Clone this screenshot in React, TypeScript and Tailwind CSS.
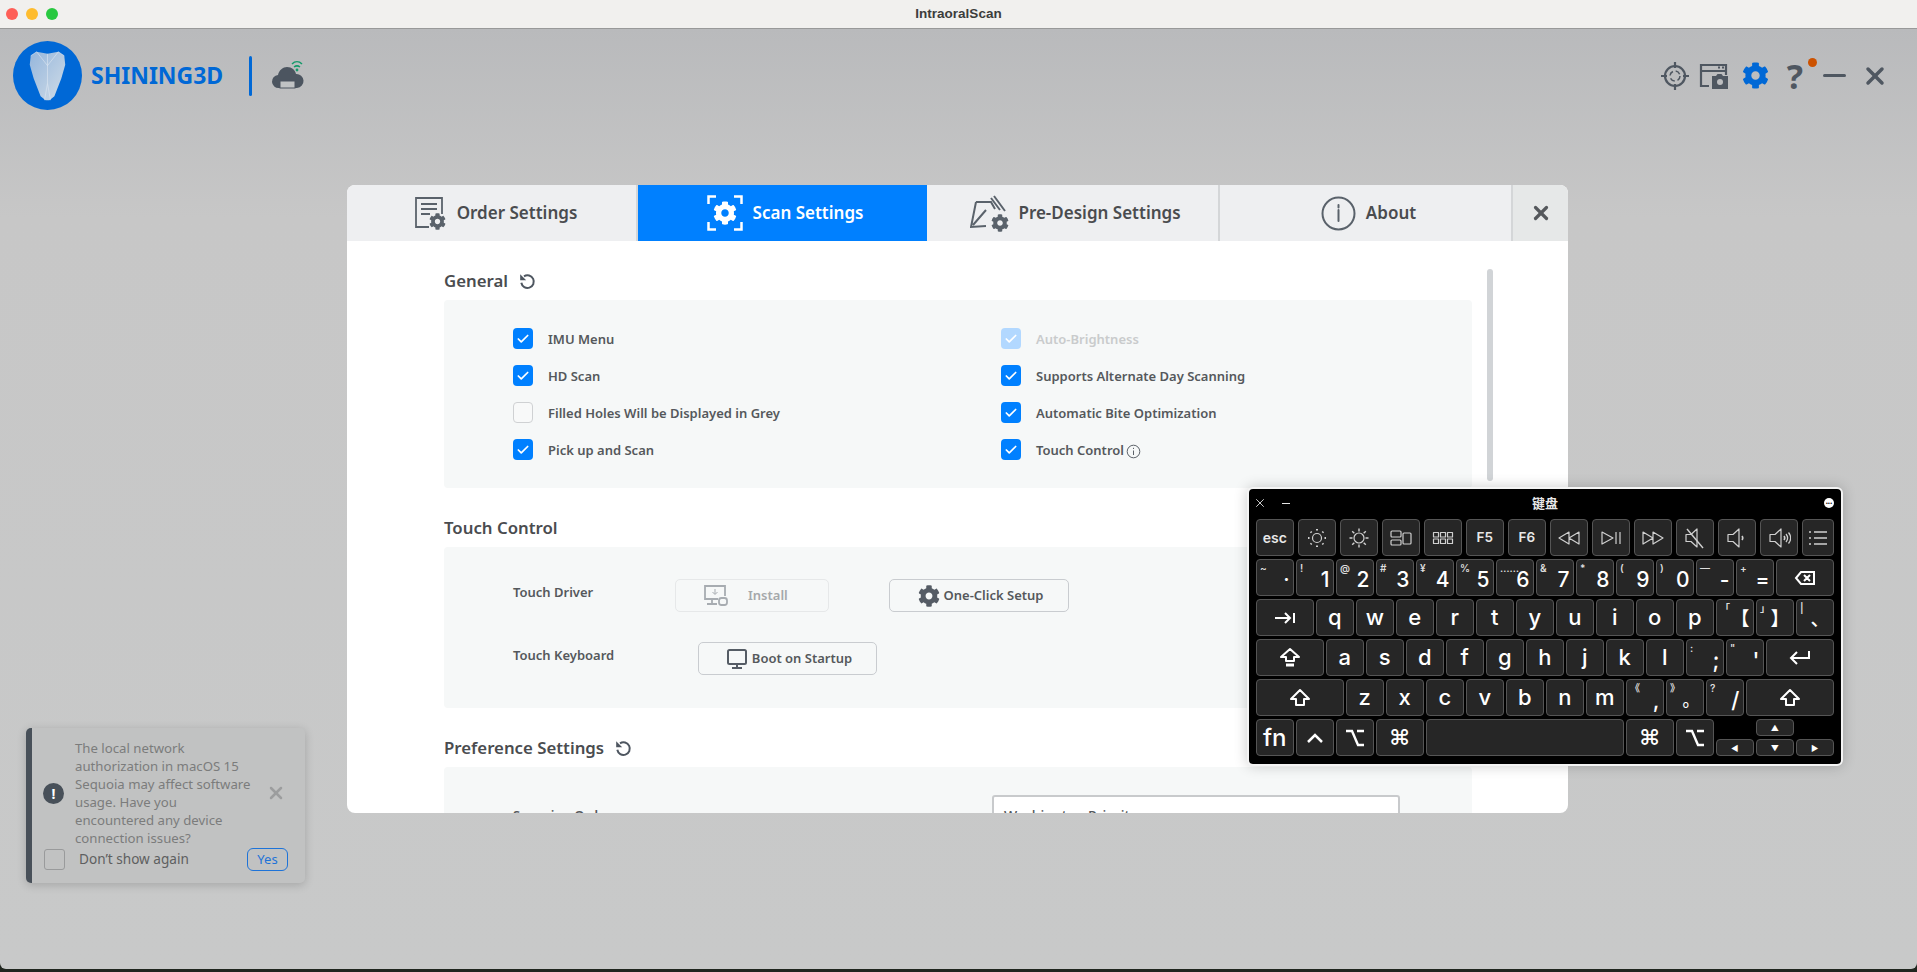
import { Check, ChevronDown, X } from 'lucide-react';
import { FaCog } from 'react-icons/fa';
import type { ReactNode } from 'react';

const Gear = ({ className = '' }: { className?: string }) => <FaCog className={className} />;

const Reset = () => (
  <svg width="17" height="17" viewBox="0 0 17 17" fill="none" stroke="#4e5660" strokeWidth="2">
    <path d="M5 3.400A6.300 6.300 0 1 1 2.300 9.800" />
    <path d="M1.200 1.200v6h6z" fill="#4e5660" stroke="none" />
  </svg>
);

const Box = ({ checked, off }: { checked?: boolean; off?: boolean }) => (
  <span
    className={`flex h-[21px] w-[20px] items-center justify-center rounded-[4px] ${
      off ? 'bg-[#b2d8ff]' : checked ? 'bg-[#0080ff]' : 'border border-[#cfd1d3] bg-[#f8f9f9]'
    }`}
  >
    {checked && <Check size={14} strokeWidth={3} className="text-white" />}
  </span>
);

const Option = ({ label, checked = true, off, info }: { label: string; checked?: boolean; off?: boolean; info?: boolean }) => (
  <div className="flex h-[21px] items-center">
    <Box checked={checked} off={off} />
    <span className={`ml-[15px] mt-[2px] text-[13px] font-semibold ${off ? 'text-[#c9cbcc]' : 'text-[#55585c]'}`}>{label}</span>
    {info && (
      <svg width="15" height="15" viewBox="0 0 15 15" className="ml-[2px] mt-[3px]" fill="none" stroke="#5c6269">
        <circle cx="7.500" cy="7.500" r="6.300" />
        <path d="M7.500 6.500v4.500M7.500 3.800v1.200" />
      </svg>
    )}
  </div>
);

const Title = ({ children, reset }: { children: string; reset?: boolean }) => (
  <div className="mb-[7px] flex h-[24px] items-center gap-[11px] text-[16.800px] font-semibold text-[#4a4c4f]">
    {children}
    {reset && <Reset />}
  </div>
);

const Tab = ({ w, icon, label, active, gap }: { w: string; icon: ReactNode; label: string; active?: boolean; gap: string }) => (
  <div
    className={`flex h-full items-center justify-center ${w} ${gap} text-[17px] font-semibold ${
      active ? 'bg-[#0080ff] text-white' : 'border-r-2 border-[#d4d6d8] bg-[#eeeff1] text-[#4a4c4f]'
    }`}
  >
    {icon}
    <span>{label}</span>
  </div>
);

const Btn = ({ w, icon, label, off, gap = 'gap-[4px] justify-center pl-[3px]' }: { w: string; icon: ReactNode; label: string; off?: boolean; gap?: string }) => (
  <div
    className={`flex h-[33px] items-center rounded-[5px] border text-[13px] font-semibold ${w} ${gap} ${
      off ? 'border-[#e6e8e9] text-[#a5a8ab]' : 'border-[#c9ccd0] text-[#55585c]'
    }`}
  >
    {icon}
    {label}
  </div>
);

const Monitor = () => (
  <svg width="22" height="22" viewBox="0 0 22 22" fill="none" stroke="#555c65" strokeWidth="2">
    <rect x="2" y="2" width="18" height="14" rx="1.500" />
    <path d="M11 16v3M6 20h10" />
  </svg>
);

const InstallIcon = () => (
  <svg width="25" height="21" viewBox="0 0 25 21" fill="none" stroke="#a7acb1" strokeWidth="1.800">
    <path d="M15 14H2V1h20v10" />
    <path d="M9 14v4M4 19h10" />
    <path d="M12 4v5M9.500 7l2.500 2.500L14.500 7" strokeWidth="1" />
    <rect x="16" y="13" width="8" height="7" rx="2.500" />
  </svg>
);

type KeyProps = { w: string; h?: string; sub?: string; main?: ReactNode; center?: boolean; size?: string };

const Key = ({ w, h = 'h-[37px]', sub, main, center, size = 'text-[22px]' }: KeyProps) => (
  <div className={`relative shrink-0 rounded-[4px] border-[1.500px] border-[#555555] bg-[#262626] text-white ${w} ${h} ${size}`}>
    {sub && <span className="absolute left-[3px] top-[2px] text-[10px] font-semibold leading-[12px] text-[#dddddd]">{sub}</span>}
    {center ? (
      <span className="flex h-full w-full items-center justify-center font-medium">{main}</span>
    ) : (
      <span className="absolute bottom-[2px] right-[3px] leading-[26px] font-medium">{main}</span>
    )}
  </div>
);

const Ico = ({ children, w = 24 }: { children: ReactNode; w?: number }) => (
  <svg width={w} height="24" viewBox={`0 0 ${w} 24`} fill="none" stroke="#d0d0d0" strokeWidth="1.200" strokeLinejoin="round">
    {children}
  </svg>
);

const Sun = ({ big }: { big?: boolean }) => (
  <Ico>
    <circle cx="12" cy="12" r={big ? 5 : 4.500} />
    <path
      strokeWidth={big ? 1.400 : 2}
      d={
        big
          ? 'M12 2.500v3M12 18.500v3M2.500 12h3M18.500 12h3M5.200 5.200l2.100 2.100M16.700 16.700l2.100 2.100M5.200 18.800l2.100-2.100M16.700 7.300l2.100-2.100'
          : 'M12 3v1.500M12 19.500V21M3 12h1.500M19.500 12H21M5.600 5.600l1 1M17.400 17.400l1 1M5.600 18.400l1-1M17.400 6.600l1-1'
      }
    />
  </Ico>
);

const Speaker = ({ waves, mute }: { waves: number; mute?: boolean }) => (
  <Ico>
    <path d="M3 8.500h5l6-5.500v18l-6-5.500H3z" />
    {waves > 0 && <path d="M17 10c1 1.300 1 2.700 0 4" strokeWidth="1.600" />}
    {waves > 1 && <path d="M19 8c2 2.500 2 5.500 0 8M21.500 6.500c2.800 3.500 2.800 7.500 0 11" strokeWidth="1.300" />}
    {mute && <path d="M4 3l16 19" strokeWidth="1.400" />}
  </Ico>
);

const Shift = ({ caps }: { caps?: boolean }) => (
  <svg width="22" height="22" viewBox="0 0 22 22" fill="none" stroke="white" strokeWidth="2" strokeLinejoin="round">
    <path d={caps ? 'M11 2 2 10h5v4h8v-4h5z' : 'M11 3 2 12h5v6h8v-6h5z'} />
    {caps && <path d="M7 18h8" strokeWidth="3" />}
  </svg>
);

const Option2 = () => (
  <svg width="20" height="18" viewBox="0 0 20 18" fill="none" stroke="white" strokeWidth="2.400">
    <path d="M1 2h6l6 14h6M12 2h7" />
  </svg>
);

const k = 'w-[37.500px]';

const Keyboard = () => (
  <div className="absolute left-[1247px] top-[487px] h-[279px] w-[596px] rounded-[6px] border-2 border-[#f4f4f4] bg-black px-[7px] shadow-[0_0_14px_rgba(0,0,0,0.2)]">
    <div className="relative flex h-[30px] items-center justify-center pb-[2px]">
      <X size={14} className="absolute -left-[3px] text-[#e5e5e5]" strokeWidth={1.500} />
      <span className="absolute left-[26px] h-px w-[8px] bg-[#e5e5e5]" />
      <span className="font-['Noto_Sans_CJK_SC',sans-serif] text-[13px] font-bold text-[#e8e8e8]">键盘</span>
      <span className="absolute right-0 flex h-[10px] w-[10px] items-center justify-center rounded-full bg-white text-[8px] font-bold leading-[6px] text-black">
        ···
      </span>
    </div>
    <div className="flex flex-col gap-[3px] font-['Inter','Noto_Sans_CJK_SC',sans-serif]">
      <div className="flex gap-[4.300px]">
        {[
          <span className="text-[14px] font-semibold text-[#e8e8e8]">esc</span>,
          <Sun />,
          <Sun big />,
          <Ico>
            <rect x="2" y="5" width="10" height="6" rx="1" />
            <rect x="2" y="14" width="10" height="5" rx="1" />
            <rect x="14" y="7" width="8" height="11" rx="1" />
          </Ico>,
          <Ico>
            {[3, 10, 17].map((x) => (
              <g key={x}>
                <rect x={x - 0.500} y="6.500" width="5" height="4.500" />
                <rect x={x - 0.500} y="13" width="5" height="4.500" />
              </g>
            ))}
          </Ico>,
          <span className="text-[13.500px] font-semibold text-[#e8e8e8]">F5</span>,
          <span className="text-[13.500px] font-semibold text-[#e8e8e8]">F6</span>,
          <Ico>
            <path d="M12 6 2 12l10 6zM22 6l-10 6 10 6z" />
          </Ico>,
          <Ico>
            <path d="M3 6l11 6-11 6zM17 6v12M21 6v12" />
          </Ico>,
          <Ico>
            <path d="M2 6l10 6-10 6zM12 6l10 6-10 6z" />
          </Ico>,
          <Speaker waves={0} mute />,
          <Speaker waves={1} />,
          <Speaker waves={2} />,
        ].map((icon, i) => (
          <Key key={i} w="w-[37.700px]" main={icon} center />
        ))}
        <Key
          w="w-[32px]"
          center
          main={
            <svg width="20" height="18" viewBox="0 0 20 18" fill="none" stroke="#d0d0d0" strokeWidth="1.500">
              <path d="M6 3h13M6 9h13M6 15h13M1 3h2M1 9h2M1 15h2" />
            </svg>
          }
        />
      </div>
      <div className="flex gap-[2.500px]">
        {[
          ['~', '·'],
          ['!', '1'],
          ['@', '2'],
          ['#', '3'],
          ['¥', '4'],
          ['%', '5'],
          ['……', '6'],
          ['&', '7'],
          ['*', '8'],
          ['(', '9'],
          [')', '0'],
          ['—', '-'],
          ['+', '='],
        ].map(([s, m]) => (
          <Key key={m} w={k} sub={s} main={m} size="text-[21px]" />
        ))}
        <Key
          w="w-[58px]"
          center
          main={
            <svg width="22" height="18" viewBox="0 0 22 18" fill="none" stroke="white" strokeWidth="2">
              <path d="M7 3h13v12H7L2 9zM10 6l6 6M16 6l-6 6" />
            </svg>
          }
        />
      </div>
      <div className="flex gap-[2.500px]">
        <Key
          w="w-[57.500px]"
          center
          main={
            <svg width="22" height="14" viewBox="0 0 22 14" fill="none" stroke="white" strokeWidth="2">
              <path d="M1 7h15M11 2l5 5-5 5M20 2v10" />
            </svg>
          }
        />
        {'qwertyuiop'.split('').map((c) => (
          <Key key={c} w={k} main={c} center />
        ))}
        <Key w={k} sub="「" main="【" size="text-[19px]" />
        <Key w={k} sub="」" main="】" size="text-[19px]" />
        <Key w={k} sub="|" main="、" size="text-[19px]" />
      </div>
      <div className="flex gap-[2.500px]">
        <Key w="w-[67.500px]" center main={<Shift caps />} />
        {'asdfghjkl'.split('').map((c) => (
          <Key key={c} w={k} main={c} center />
        ))}
        <Key w={k} sub=":" main=";" />
        <Key w={k} sub={'"'} main="'" />
        <Key
          w="w-[68px]"
          center
          main={
            <svg width="22" height="18" viewBox="0 0 22 18" fill="none" stroke="white" strokeWidth="2">
              <path d="M20 2v7H3M8 3 2 9l6 6" />
            </svg>
          }
        />
      </div>
      <div className="flex gap-[2.500px]">
        <Key w="w-[87.500px]" center main={<Shift />} />
        {'zxcvbnm'.split('').map((c) => (
          <Key key={c} w={k} main={c} center />
        ))}
        <Key w={k} sub="《" main="," />
        <Key w={k} sub="》" main="。" size="text-[17px]" />
        <Key w={k} sub="?" main="/" />
        <Key w="w-[88px]" center main={<Shift />} />
      </div>
      <div className="flex gap-[2.500px]">
        <Key w={k} main="fn" center size="text-[24px]" />
        <Key
          w={k}
          center
          main={
            <svg width="18" height="12" viewBox="0 0 18 12" fill="none" stroke="white" strokeWidth="2.500">
              <path d="M2 10 9 3l7 7" />
            </svg>
          }
        />
        <Key w={k} center main={<Option2 />} />
        <Key w="w-[47.500px]" main="⌘" center />
        <Key w="w-[197.500px]" />
        <Key w="w-[47.500px]" main="⌘" center />
        <Key w={k} center main={<Option2 />} />
        <div className="flex w-[118px] flex-col gap-[3px]">
          <div className="pl-[40px]">
            <Key w={k} h="h-[17px]" main="▲" center size="text-[8px]" />
          </div>
          <div className="flex gap-[2.500px]">
            <Key w={k} h="h-[17px]" main="◀" center size="text-[8px]" />
            <Key w={k} h="h-[17px]" main="▼" center size="text-[8px]" />
            <Key w={k} h="h-[17px]" main="▶" center size="text-[8px]" />
          </div>
        </div>
      </div>
    </div>
  </div>
);

const Toast = () => (
  <div className="absolute left-[26px] top-[728px] flex h-[155px] w-[279px] rounded-[5px] border-l-[6px] border-[#485059] bg-[#c1c2c2] shadow-[0_2px_10px_rgba(0,0,0,0.18)]">
    <div className="flex w-full flex-col pl-[11px] pr-[14px] pt-[11px]">
      <div className="flex items-center">
        <span className="flex h-[21px] w-[21px] shrink-0 items-center justify-center rounded-full bg-[#485059] text-[14px] font-bold text-white">
          !
        </span>
        <p className="ml-[11px] w-[186px] text-[13.200px] leading-[18px] text-[#7b7c7c]">
          The local network
          <br />
          authorization in macOS 15
          <br />
          Sequoia may affect software
          <br />
          usage. Have you
          <br />
          encountered any device
          <br />
          connection issues?
        </p>
        <X size={20} strokeWidth={3} className="ml-[5px] text-[#9c9d9e]" />
      </div>
      <div className="mt-[1px] flex items-center">
        <span className="ml-[1px] h-[21px] w-[21px] rounded-[3px] border border-[#999a9b]" />
        <span className="ml-[14px] text-[13.600px] text-[#5e5f60]">Don’t show again</span>
        <span className="ml-auto mr-[3px] flex h-[23px] w-[41px] items-center justify-center rounded-[6px] border border-[#1e73d8] text-[13px] text-[#1e73d8]">
          Yes
        </span>
      </div>
    </div>
  </div>
);

export default function App() {
  return (
    <div className="relative h-[972px] w-[1917px] overflow-hidden bg-[#20261f] font-['Noto_Sans',sans-serif]">
      <div className="flex h-[969px] flex-col overflow-hidden rounded-b-[6px]">
        <div className="relative flex h-[29px] shrink-0 items-center justify-center border-b border-[#999999] bg-[#f1f0ee] font-['Liberation_Sans',sans-serif] text-[13.500px] font-bold text-[#3c3c3c]">
          <div className="absolute left-[6px] flex gap-[8px]">
            <span className="h-[12px] w-[12px] rounded-full bg-[#fe5f57]" />
            <span className="h-[12px] w-[12px] rounded-full bg-[#febc2e]" />
            <span className="h-[12px] w-[12px] rounded-full bg-[#28c840]" />
          </div>
          IntraoralScan
        </div>

        <div className="flex-1 bg-gradient-to-b from-[#b9babc] via-[#c7c7c7] via-20% to-[#c8c9c9]">
          {/* header */}
          <div className="flex h-[93px] items-center pl-[13px]">
            <svg width="69" height="69" viewBox="0 0 70 70">
              <defs>
                <linearGradient id="tooth" x1="0" y1="0" x2="1" y2="1">
                  <stop offset="0" stopColor="#95b6dc" />
                  <stop offset="1" stopColor="#d0dce7" />
                </linearGradient>
              </defs>
              <circle cx="35" cy="35" r="35" fill="#0068d6" />
              <path d="M24 11 35 13 46 11 52 15 53 24 49 38 42 56 37 60 33 60 28 56 21 38 17 24 18 15z" fill="url(#tooth)" />
              <path
                d="M35 13v30M35 43l-3 17M35 43l3 17M24 11l-6 4M24 11l11 14M46 11 35 25M46 11l6 4"
                stroke="#dfe8f1"
                strokeWidth="0.600"
                fill="none"
              />
            </svg>
            <span className="ml-[9px] text-[23px] font-bold text-[#0068d6]">SHINING3D</span>
            <span className="ml-[26px] h-[40px] w-[3px] rounded bg-[#0068d6]" />
            <svg width="34" height="32" viewBox="0 0 34 32" className="ml-[19px]">
              <path d="M8 28a6.500 6.500 0 0 1-1-13c1-5 5-8 9-8 5 0 8 3 9 7a7 7 0 0 1 1 14z" fill="#4c5560" />
              <rect x="9" y="21" width="15" height="7" fill="#c0c2c4" stroke="#4c5560" />
              <path d="M21 4c3-3 7-3 10 0M23 7c2-1.500 4-1.500 6 0" stroke="#159a6a" strokeWidth="1.500" fill="none" />
              <circle cx="26" cy="10" r="1.400" fill="#159a6a" />
            </svg>

            <div className="ml-auto flex items-center pr-[28px] text-[#4f5761]">
              <svg width="30" height="30" viewBox="0 0 30 30" fill="none" stroke="#4f5761" strokeWidth="2.200">
                <circle cx="15" cy="15" r="10" />
                <circle cx="15" cy="15" r="5" strokeWidth="1.500" strokeDasharray="5 2.900" />
                <path d="M15 1v6M15 23v6M1 15h6M23 15h6" />
              </svg>
              <svg width="30" height="26" viewBox="0 0 30 26" className="ml-[9px]" fill="none" stroke="#4f5761" strokeWidth="2.200">
                <path d="M10 23H2V2h25v10M2 8h25" />
                <path d="M19 4.500h2M23 4.500h2" />
                <path d="M13 13h4l1.500-2h4l1.500 2h5v13H13z" fill="#4f5761" stroke="none" />
                <circle cx="21" cy="19" r="3" fill="#bdbec0" stroke="none" />
              </svg>
              <Gear className="ml-[13px] h-[27px] w-[27px] text-[#0068d6]" />
              <span className="relative ml-[18px] text-[34px] font-bold leading-none">
                ?
                <span className="absolute -right-[14px] -top-[1px] h-[9px] w-[9px] rounded-full bg-[#cc5200]" />
              </span>
              <span className="ml-[20px] h-[3px] w-[23px] rounded bg-[#4f5761]" />
              <X size={28} strokeWidth={3} className="ml-[15px]" />
            </div>
          </div>

          {/* settings dialog */}
          <div className="relative ml-[347px] mt-[63px] h-[628px] w-[1221px] overflow-hidden rounded-[8px] bg-white">
            <div className="flex h-[56px]">
              <Tab
                w="w-[291px] pl-[9px]"
                gap="gap-[11px]"
                label="Order Settings"
                icon={
                  <span className="relative h-[33px] w-[31px]">
                    <svg width="31" height="33" viewBox="0 0 31 33" fill="none" stroke="#5a626b" strokeWidth="1.800">
                      <path d="M14 30H1V1h26v16M6 7h16M6 12h16M6 17h9" />
                    </svg>
                    <Gear className="absolute bottom-0 right-0 h-[17px] w-[17px] text-[#5a626b]" />
                  </span>
                }
              />
              <Tab
                w="w-[289px] pl-[5px]"
                gap="gap-[10px]"
                active
                label="Scan Settings"
                icon={
                  <span className="relative flex h-[36px] w-[36px] items-center justify-center border-white">
                    <svg width="36" height="36" viewBox="0 0 36 36" className="absolute" fill="none" stroke="white" strokeWidth="2.500">
                      <path d="M1.500 9V1.500H9M27 1.500h7.500V9M1.500 27v7.500H9M27 34.500h7.500V27" />
                    </svg>
                    <Gear className="h-[24px] w-[24px] text-white" />
                  </span>
                }
              />
              <Tab
                w="w-[293px] pl-[6px]"
                gap="gap-[9px]"
                label="Pre-Design Settings"
                icon={
                  <span className="relative h-[38px] w-[39px]">
                    <svg width="39" height="38" viewBox="0 0 39 38" fill="none" stroke="#5a626b" strokeWidth="2">
                      <path d="M6 8h15l4 7M6 8 1 33l15-1M3 31l13-15M24 2l11 15M21 4l9 12" />
                    </svg>
                    <Gear className="absolute bottom-0 right-0 h-[18px] w-[18px] bg-[#eeeff1] text-[#5a626b]" />
                  </span>
                }
              />
              <Tab
                w="w-[293px] pl-[6px]"
                gap="gap-[10px]"
                label="About"
                icon={
                  <svg width="35" height="35" viewBox="0 0 35 35" fill="none" stroke="#5a626b" strokeWidth="2">
                    <circle cx="17.500" cy="17.500" r="16" />
                    <path d="M17.500 14v11M17.500 9v2.500" strokeLinecap="round" />
                  </svg>
                }
              />
              <div className="flex flex-1 items-center justify-center bg-[#e6e8e8] text-[#55585c]">
                <X size={22} strokeWidth={3.500} />
              </div>
            </div>

            <div className="h-[572px] overflow-hidden pl-[97px] pr-[96px] pt-[28px]">
              <Title reset>General</Title>
              <div className="mb-[28px] grid h-[188px] grid-cols-[488px_1fr] content-start gap-y-[16px] rounded-[4px] bg-[#f6f8f8] pl-[69px] pt-[28px]">
                <Option label="IMU Menu" />
                <Option label="Auto-Brightness" off />
                <Option label="HD Scan" />
                <Option label="Supports Alternate Day Scanning" />
                <Option label="Filled Holes Will be Displayed in Grey" checked={false} />
                <Option label="Automatic Bite Optimization" />
                <Option label="Pick up and Scan" />
                <Option label="Touch Control" info />
              </div>

              <Title>Touch Control</Title>
              <div className="mb-[28px] flex h-[161px] flex-col gap-[30px] rounded-[4px] bg-[#f6f8f8] pl-[69px] pt-[32px]">
                <div className="flex">
                  <span className="mt-[4px] w-[162px] text-[13px] font-semibold text-[#55585c]">Touch Driver</span>
                  <Btn w="w-[154px]" gap="gap-[20px] pl-[27px]" off icon={<InstallIcon />} label="Install" />
                  <div className="w-[60px]" />
                  <Btn w="w-[180px]" icon={<Gear className="h-[22px] w-[22px] text-[#555c65]" />} label="One-Click Setup" />
                </div>
                <div className="flex">
                  <span className="mt-[4px] w-[185px] text-[13px] font-semibold text-[#55585c]">Touch Keyboard</span>
                  <Btn w="w-[179px]" icon={<Monitor />} label="Boot on Startup" />
                </div>
              </div>

              <Title reset>Preference Settings</Title>
              <div className="flex h-[120px] rounded-[4px] bg-[#f6f8f8] pl-[69px] pt-[28px]">
                <span className="mt-[11px] w-[479px] text-[13px] font-semibold text-[#55585c]">Scanning Order</span>
                <div className="flex h-[36px] w-[408px] justify-between rounded-[3px] border-2 border-[#c8cacc] bg-white pl-[10px] pr-[12px] pt-[8px] text-[14px] font-medium text-[#55585c]">
                  Washington Priority
                  <ChevronDown size={16} strokeWidth={2} className="mt-[5px]" />
                </div>
              </div>
            </div>

            {/* scrollbar thumb */}
            <div className="absolute left-[1140px] top-[84px] h-[212px] w-[6px] rounded-full bg-[#d1d4d7]" />
          </div>
        </div>
      </div>

      <Toast />
      <Keyboard />
    </div>
  );
}
